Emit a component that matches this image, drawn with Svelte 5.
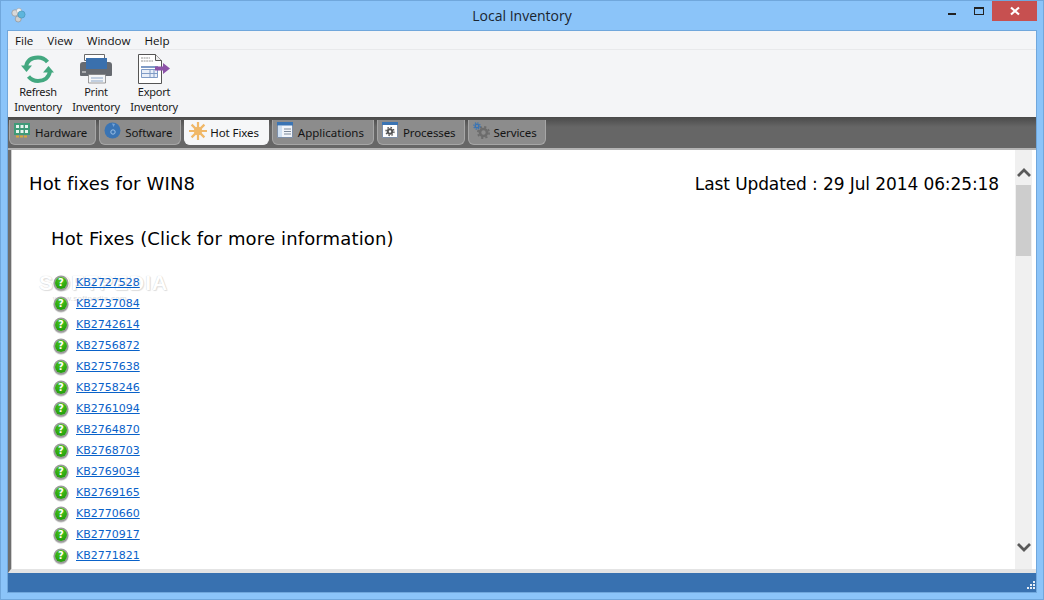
<script>
  const tabs = [
    { name: 'Hardware', icon: 'hw' },
    { name: 'Software', icon: 'sw' },
    { name: 'Hot Fixes', icon: 'hf', active: true },
    { name: 'Applications', icon: 'app' },
    { name: 'Processes', icon: 'proc' },
    { name: 'Services', icon: 'svc' }
  ];
  const kbs = ['KB2727528','KB2737084','KB2742614','KB2756872','KB2757638','KB2758246','KB2761094','KB2764870','KB2768703','KB2769034','KB2769165','KB2770660','KB2770917','KB2771821'];
</script>

<div class="window">
  <header class="titlebar">
    <svg class="appicon" width="16" height="16" viewBox="0 0 16 16">
      <circle cx="5" cy="6" r="3.2" fill="#d8d8d8" stroke="#8a8a8a" stroke-width=".6" />
      <circle cx="9" cy="3.8" r="2.6" fill="#f2f2f2" stroke="#999" stroke-width=".5" />
      <circle cx="8.2" cy="12" r="3" fill="#cfcfcf" stroke="#8a8a8a" stroke-width=".6" />
      <circle cx="11.5" cy="7.5" r="3.6" fill="#5db5dc" stroke="#3d88a8" stroke-width=".5" />
    </svg>
    <div class="title">Local Inventory</div>
    <div class="controls">
      <div class="ctl"><span class="min"></span></div>
      <div class="ctl"><span class="max"></span></div>
      <div class="close">
        <svg width="10" height="10" viewBox="0 0 10 10"><path d="M1 1.5 9 8.5M9 1.5 1 8.5" stroke="#fff" stroke-width="2.2" /></svg>
      </div>
    </div>
  </header>

  <div class="client">
    <nav class="menu">
      <span>File</span><span>View</span><span>Window</span><span>Help</span>
    </nav>

    <div class="toolbar">
      <div class="tool">
        <svg width="34" height="32" viewBox="0 0 34 32">
          <g fill="none" stroke="#43a880" stroke-width="4">
            <path d="M5 14C6 7 11 4.500 17 4.500c4 0 7 1.500 9.500 4.500" />
            <path d="M29 18c-1 7-6 10-12 10-4 0-7-1.500-9.500-4.500" />
          </g>
          <path d="M0 12.500H11L5.500 19Z" fill="#43a880" />
          <path d="M33 19.500H22L27.500 13Z" fill="#43a880" />
        </svg>
        <span>Refresh<br />Inventory</span>
      </div>
      <div class="tool">
        <svg width="34" height="32" viewBox="0 0 34 32">
          <path d="M5.500 1.500h20v6h-20z" fill="#fff" stroke="#6a6a6a" />
          <path d="M4 9h26a3 3 0 0 1 3 3v10a1 1 0 0 1-1 1H2a1 1 0 0 1-1-1V12a3 3 0 0 1 3-3Z" fill="#666a70" />
          <path d="M7 5h21v11H7z" fill="#3a70ad" />
          <path d="M9.500 21.500h17v8.500h-17z" fill="#f4f6f8" stroke="#777" stroke-width=".7" />
          <path d="M12 25h12M12 28h12" stroke="#8fa8c8" />
          <path d="M3 19h4" stroke="#eee" />
        </svg>
        <span>Print<br />Inventory</span>
      </div>
      <div class="tool">
        <svg width="34" height="32" viewBox="0 0 34 32">
          <path d="M1.500 1.500h17l6 6V30.500h-23Z" fill="#fff" stroke="#555" />
          <path d="M18.500 1.500v6h6" fill="#eee" stroke="#555" />
          <path d="M4 5h9M4 8h12" stroke="#777" stroke-width=".8" stroke-dasharray="2 .6" />
          <path d="M4 13h17v2H4z" fill="#7f9bc6" />
          <path d="M4.500 16.500h16v8h-16z" fill="#e8eef8" stroke="#7f9bc6" />
          <path d="M4.500 20.500h16M13 16.500v8M17 16.500v8" stroke="#7f9bc6" />
          <path d="M18 13.500h8V10l7 5.500-7 5.500v-3.500h-8Z" fill="#8c52a8" />
        </svg>
        <span>Export<br />Inventory</span>
      </div>
    </div>

    <div class="tabstrip">
      {#each tabs as t}
        <div class="tab" class:active={t.active}>
          <svg width="18" height="18" viewBox="0 0 18 18">
            {#if t.icon === 'hw'}
              <path d="M0 1h16v12H0z" fill="#3f9a78" />
              <path d="M2 3h3v3H2zM6.500 3h3v3h-3zM11 3h3v3h-3zM2 8h3v3H2zM6.500 8h3v3h-3zM11 8h3v3h-3z" fill="#e8f4ef" />
              <path d="M2 13.500h3v2H2zM6 13.500h3v2H6zM10 13.500h3v2h-3z" fill="#d6a83c" />
            {:else if t.icon === 'sw'}
              <circle cx="8.500" cy="8.500" r="8" fill="#3a74b4" />
              <circle cx="9" cy="10" r="2.200" fill="none" stroke="#9cc0e6" />
              <path d="M8 1.500a7 7 0 0 1 3 .5L9.500 5Z" fill="#76a4d8" />
            {:else if t.icon === 'hf'}
              <g stroke="#f0b868" stroke-width="2.200">
                <path d="M9 0v18M0 9h18M2.600 2.600l12.800 12.800M15.400 2.600 2.600 15.400" />
              </g>
              <circle cx="9" cy="9" r="4.200" fill="#f0b868" />
            {:else if t.icon === 'app'}
              <path d="M.5 .5h15v15H.5z" fill="#f2f5fa" stroke="#7d8fa8" />
              <path d="M0 0h16v3.500H0z" fill="#3a74b4" />
              <path d="M1 4h4v11H1z" fill="#cfe0f2" />
              <path d="M7 7h7M7 9.500h7M7 12h7" stroke="#7d8a9a" />
            {:else if t.icon === 'proc'}
              <path d="M.5 .5h15v15H.5z" fill="#fff" stroke="#7d8fa8" />
              <path d="M0 0h16v3H0z" fill="#3a74b4" />
              <circle cx="8" cy="9.500" r="2.200" fill="none" stroke="#555" stroke-width="2" />
              <circle cx="8" cy="9.500" r="4" fill="none" stroke="#555" stroke-width="1.400" stroke-dasharray="1.500 1.640" />
            {:else}
              <circle cx="10.500" cy="10.500" r="3.500" fill="none" stroke="#6c6c6c" stroke-width="2.600" />
              <circle cx="10.500" cy="10.500" r="5.600" fill="none" stroke="#6c6c6c" stroke-width="1.800" stroke-dasharray="2.200 2.200" />
              <circle cx="4" cy="4" r="1.800" fill="none" stroke="#3a74b4" stroke-width="1.400" />
              <circle cx="4" cy="4" r="3.200" fill="none" stroke="#3a74b4" stroke-width="1.200" stroke-dasharray="1.300 1.200" />
            {/if}
          </svg>
          <span>{t.name}</span>
        </div>
      {/each}
    </div>

    <div class="panel">
      <main class="page">
        <div class="headrow">
          <h1>Hot fixes for WIN8</h1>
          <div class="updated">Last Updated : 29 Jul 2014 06:25:18</div>
        </div>
        <h2>Hot Fixes (Click for more information)</h2>
        <div class="mark">SOFTPEDIA<small>www.softpedia.com</small></div>
        <ul>
          {#each kbs as kb}
            <li>
              <span class="q">?</span>
              <a href="#top">{kb}</a>
            </li>
          {/each}
          <li><span class="q"></span></li>
        </ul>
      </main>
      <div class="scroll">
        <svg class="arrow" width="14" height="10" viewBox="0 0 14 10"><path d="M1 8 7 2l6 6" fill="none" stroke="#5a5a5a" stroke-width="2.800" /></svg>
        <div class="track"><div class="thumb"></div></div>
        <svg class="arrow" width="14" height="10" viewBox="0 0 14 10"><path d="M1 2l6 6 6-6" fill="none" stroke="#5a5a5a" stroke-width="2.800" /></svg>
      </div>
    </div>

    <footer class="status">
      <svg width="8" height="8" viewBox="0 0 8 8" fill="#e8eef5"><path d="M6 0h2v2H6zM3 3h2v2H3zM6 3h2v2H6zM0 6h2v2H0zM3 6h2v2H3zM6 6h2v2H6z" /></svg>
    </footer>
  </div>
</div>

<style>
  :global(body) { margin: 0; }
  .window {
    width: 1044px; height: 600px; box-sizing: border-box;
    background: #8bc4f9; border: 1px solid #70a7dc;
    display: flex; flex-direction: column; overflow: hidden;
    font-family: "Noto Sans", "Open Sans", sans-serif;
  }
  .titlebar { height: 30px; display: flex; position: relative; flex: none; padding-left: 9px; }
  .appicon { margin-top: 6px; }
  .title {
    position: absolute; left: 0; right: 0; top: 5px; text-align: center;
    font: 14px/20px "Open Sans", sans-serif; color: #1a2530;
  }
  .controls { position: absolute; right: 6px; top: 0; display: flex; }
  .ctl { width: 27px; height: 20px; display: flex; align-items: center; justify-content: center; }
  .min { width: 8px; height: 2px; background: #222; margin-top: 6px; }
  .max { width: 8px; height: 5px; border: 1px solid #222; border-top-width: 2px; }
  .close { width: 45px; height: 20px; background: #c75050; display: flex; align-items: center; justify-content: center; }
  .client {
    margin: 0 7px; height: 561px; display: flex; flex-direction: column;
    background: #f4f5f7; box-shadow: 0 0 0 1px #70a7dc;
  }
  .menu {
    height: 19px; flex: none; display: flex; gap: 14px; padding-left: 7px; box-sizing: border-box;
    font: 11.6px/19px "Open Sans", "Noto Sans", sans-serif; color: #111; border-bottom: 1px solid #e8e9eb;
  }
  .toolbar { height: 67px; flex: none; display: flex; padding-left: 1px; }
  .tool {
    width: 58px; display: flex; flex-direction: column; align-items: center; padding-top: 3px; box-sizing: border-box;
    font: 11px/15px "Noto Sans", sans-serif; color: #1a1a1a; text-align: center;
  }
  .tool svg { flex: none; height: 32px; }
  .tool span { white-space: nowrap; letter-spacing: -.25px; margin-top: -1px; }
  .tabstrip {
    height: 33px; flex: none; background: linear-gradient(#4a4a4a, #666 10px); display: flex; gap: 3px;
    padding: 3px 0 0 1px; box-sizing: border-box; border-bottom: 2px solid #b4b4b4;
  }
  .tab {
    height: 25px; box-sizing: border-box; display: flex; align-items: center; gap: 3px; padding: 0 8px 0 4px;
    background: #8c8c8c; border: 1px solid #a6a6a6; border-top: none; border-radius: 0 0 6px 6px;
    font: 11.5px "Noto Sans", sans-serif; color: #141414; letter-spacing: -.1px;
  }
  .tab.active { background: #f6f7f8; border-color: #f6f7f8; padding-right: 9px; }
  .tab:nth-child(4) { padding-right: 9px; letter-spacing: 0; }
  .tab svg { flex: none; margin-top: -2px; }
  .panel {
    flex: 1; min-height: 0; display: flex; background: #fff;
    border-left: 3px solid #6e6e6e; border-bottom: 4px solid #e4e4e4;
    overflow: hidden;
  }
  .page {
    flex: 1; min-width: 0; padding: 23px 16px 0 18px; box-sizing: border-box; color: #000;
    overflow: hidden; position: relative; box-shadow: inset 1px 0 0 #d0d0d0;
    font-family: "DejaVu Sans", sans-serif;
  }
  .headrow { display: flex; justify-content: space-between; height: 22px; }
  h1 { margin: 0; font: 400 18px/22px "DejaVu Sans", sans-serif; letter-spacing: .15px; }
  .updated { font-size: 17px; line-height: 22px; letter-spacing: -.1px; }
  h2 { margin: 33px 0 0 22px; font: 400 18px/22px "DejaVu Sans", sans-serif; letter-spacing: .15px; }
  ul { list-style: none; margin: 22px 0 0 26px; padding: 0; position: relative; }
  li { height: 21px; display: flex; align-items: center; gap: 9px; }
  .q {
    width: 12px; height: 12px; border-radius: 50%; background: radial-gradient(circle at 50% 30%, #4ec81e, #169008);
    box-shadow: 0 0 0 1.500px #9a9a9a, 0 1px 1px 1.500px #bbb; color: #fff; font: 700 10px/12px "DejaVu Sans", sans-serif; text-align: center; flex: none;
  }
  a { color: #0a62c9; font: 11px/14px "DejaVu Sans", sans-serif; text-decoration: underline; }
  .mark {
    position: absolute; left: 28px; top: 122px; width: 140px; pointer-events: none;
    font: 700 21px/22px "Liberation Sans", sans-serif; letter-spacing: 1px; color: #fff;
    text-shadow: 0 0 1px #c8c8c8, 1px 1px 1px #e0e0e0;
  }
  .mark small { display: block; font: 8px/10px "Liberation Sans", sans-serif; letter-spacing: .3px; color: #ddd; text-shadow: none; padding-left: 14px; }
  .scroll { width: 17px; flex: none; margin: 0 4px 0 0; background: #f0f0f0; display: flex; flex-direction: column; align-items: center; }
  .arrow { flex: none; margin: 18px 0 7px; }
  .arrow:last-child { margin: 0 0 17px; }
  .track { flex: 1; align-self: stretch; }
  .thumb { height: 71px; margin: 0 1px; background: #cdcdcd; }
  .status { height: 19px; flex: none; background: #3871b0; display: flex; justify-content: flex-end; align-items: flex-end; padding: 0 1px 3px 0; box-sizing: border-box; }
</style>
